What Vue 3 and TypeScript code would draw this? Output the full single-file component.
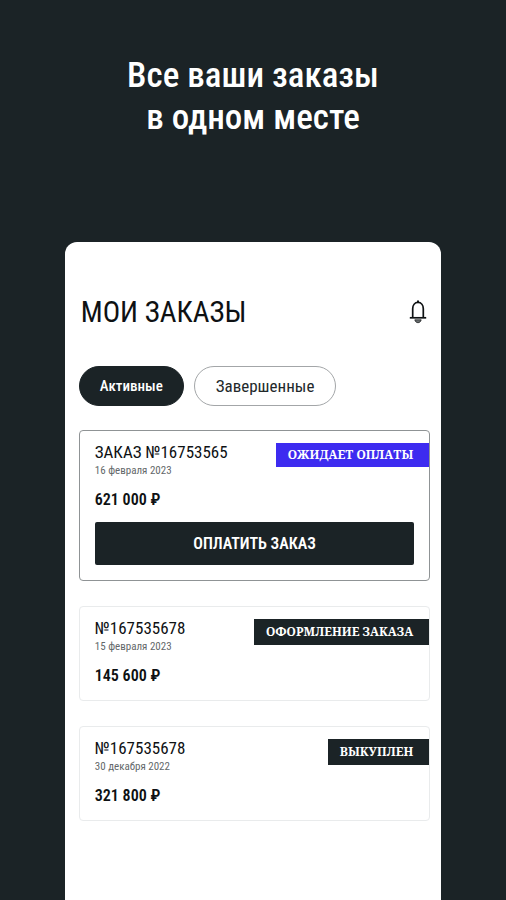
<script setup lang="ts">
import { ref } from 'vue'

interface Order {
  title: string
  date: string
  price: string
  status: string
  payable: boolean
}

const tabs: string[] = ['Активные', 'Завершенные']
const activeTab = ref(0)

const orders: Order[] = [
  { title: 'ЗАКАЗ №16753565', date: '16 февраля 2023', price: '621 000 ₽', status: 'Ожидает оплаты', payable: true },
  { title: '№167535678', date: '15 февраля 2023', price: '145 600 ₽', status: 'Оформление заказа', payable: false },
  { title: '№167535678', date: '30 декабря 2022', price: '321 800 ₽', status: 'Выкуплен', payable: false },
]
</script>

<template>
  <main class="promo">
    <h1 class="headline">Все ваши заказы<br />в одном месте</h1>

    <section class="screen">
      <header class="bar">
        <h2 class="title">МОИ ЗАКАЗЫ</h2>
        <button class="bell" type="button" aria-label="Уведомления">
          <svg viewBox="0 0 20 26" width="20" height="26" fill="none" stroke="currentColor">
            <path d="M4.700 18.500V9.800C4.700 6 6.800 3.400 10 3.400s5.300 2.600 5.300 6.400v8.700" stroke-width="1.700" />
            <path d="M10 1.500v2" stroke-width="2" />
            <path d="M1.800 18.800h16.400" stroke-width="1.700" />
            <path d="M6.800 20.800c.4 1.800 1.600 2.900 3.200 2.900s2.800-1.100 3.200-2.900z" fill="#6b6f71" stroke="currentColor" stroke-width=".7" />
          </svg>
        </button>
      </header>

      <nav class="tabs">
        <button
          v-for="(tab, i) in tabs"
          :key="tab"
          type="button"
          class="tab"
          :class="{ active: activeTab === i }"
          :aria-pressed="activeTab === i"
          @click="activeTab = i"
        >{{ tab }}</button>
      </nav>

      <div class="orders">
        <article v-for="(order, i) in orders" :key="i" class="order" :class="{ payable: order.payable }">
          <div class="summary">
            <div class="info">
              <h3 class="number">{{ order.title }}</h3>
              <p class="date">{{ order.date }}</p>
            </div>
            <span class="status">{{ order.status }}</span>
          </div>
          <p class="price">{{ order.price }}</p>
          <button v-if="order.payable" class="pay" type="button">ОПЛАТИТЬ ЗАКАЗ</button>
        </article>
      </div>
    </section>
  </main>
</template>

<style>
body {
  margin: 0;
  background: #1b2326;
}
</style>

<style scoped>
.promo {
  box-sizing: border-box;
  display: flex;
  flex-direction: column;
  min-height: 100vh;
  padding: 55px 12.8% 0;
  background: #1b2326;
  color: #0e1113;
  font-family: "Roboto Condensed", "Liberation Sans Narrow", Roboto, sans-serif;
}

h1, h2, h3, p {
  margin: 0;
}

button {
  font-family: inherit;
  cursor: pointer;
}

.headline {
  margin: 0 -20px;
  color: #fff;
  font-size: 35px;
  font-weight: 500;
  line-height: 42px;
  text-align: center;
}

.screen {
  flex: 1;
  margin-top: 103px;
  padding: 50px 11px 0 14px;
  border-radius: 12px 12px 0 0;
  background: #fff;
}

.bar {
  display: flex;
  align-items: center;
  justify-content: space-between;
  padding: 0 2px;
}

.title {
  font-size: 29px;
  font-weight: 400;
  line-height: 40px;
}

.bell {
  display: flex;
  padding: 0;
  border: 0;
  background: none;
  color: #0e1113;
}

.tabs {
  display: flex;
  gap: 10px;
  margin-top: 34px;
}

.tab {
  height: 40px;
  padding: 0 21px;
  border: 1px solid #a3a6a8;
  border-radius: 20px;
  background: #fff;
  color: #22282a;
  font-size: 17px;
}

.tab.active {
  padding: 0 20px;
  border-color: #1b2326;
  background: #1b2326;
  color: #fff;
  font-size: 15px;
  font-weight: 500;
}

.orders {
  display: flex;
  flex-direction: column;
  gap: 25px;
  margin-top: 24px;
}

.order {
  padding: 12px 0 15px 15px;
  border: 1px solid #e9ebec;
  border-radius: 4px;
}

.order.payable {
  border-color: #8f9395;
}

.summary {
  display: flex;
  align-items: flex-start;
  justify-content: space-between;
}

.number {
  font-size: 17px;
  font-weight: 400;
  line-height: 19px;
}

.date {
  color: #63686a;
  font-size: 11px;
  line-height: 18px;
}

.status {
  padding: 0 16px 0 12px;
  background: #1b2326;
  color: #fff;
  font-family: "Noto Serif", "Liberation Serif", serif;
  font-size: 12px;
  font-weight: 700;
  line-height: 26px;
  text-transform: uppercase;
}

.payable .status {
  background: #3d2bf0;
  line-height: 24px;
}

.price {
  margin-top: 10px;
  font-size: 16px;
  font-weight: 600;
  line-height: 20px;
}

.order:not(.payable) {
  padding-bottom: 14px;
}

.pay {
  display: block;
  width: calc(100% - 15px);
  height: 43px;
  margin-top: 12px;
  border: 0;
  border-radius: 2px;
  background: #1b2326;
  color: #fff;
  font-size: 16px;
  font-weight: 600;
}
</style>
